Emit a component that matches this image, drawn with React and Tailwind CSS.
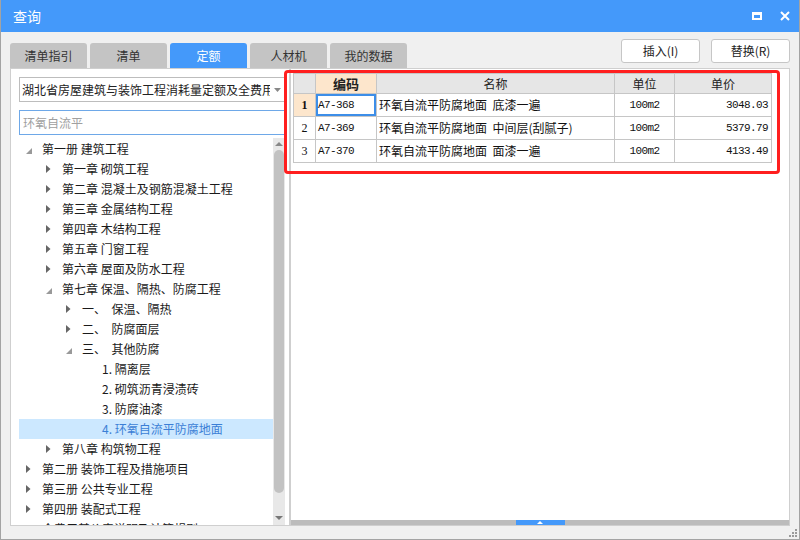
const tree = [
  { lv: 0, t: 'exp', label: '第一册 建筑工程' },
  { lv: 1, t: 'col', label: '第一章 砌筑工程' },
  { lv: 1, t: 'col', label: '第二章 混凝土及钢筋混凝土工程' },
  { lv: 1, t: 'col', label: '第三章 金属结构工程' },
  { lv: 1, t: 'col', label: '第四章 木结构工程' },
  { lv: 1, t: 'col', label: '第五章 门窗工程' },
  { lv: 1, t: 'col', label: '第六章 屋面及防水工程' },
  { lv: 1, t: 'exp', label: '第七章 保温、隔热、防腐工程' },
  { lv: 2, t: 'col', label: '一、  保温、隔热' },
  { lv: 2, t: 'col', label: '二、  防腐面层' },
  { lv: 2, t: 'exp', label: '三、  其他防腐' },
  { lv: 3, t: 'leaf', label: '1. 隔离层' },
  { lv: 3, t: 'leaf', label: '2. 砌筑沥青浸渍砖' },
  { lv: 3, t: 'leaf', label: '3. 防腐油漆' },
  { lv: 3, t: 'leaf', label: '4. 环氧自流平防腐地面', sel: true },
  { lv: 1, t: 'col', label: '第八章 构筑物工程' },
  { lv: 0, t: 'col', label: '第二册 装饰工程及措施项目' },
  { lv: 0, t: 'col', label: '第三册 公共专业工程' },
  { lv: 0, t: 'col', label: '第四册 装配式工程' },
  { lv: 0, t: 'leaf', label: '全费用基价表说明及计算规则' },
];

const rows = [
  { n: '1', code: 'A7-368', name: '环氧自流平防腐地面  底漆一遍', unit: '100m2', price: '3048.03' },
  { n: '2', code: 'A7-369', name: '环氧自流平防腐地面  中间层(刮腻子)', unit: '100m2', price: '5379.79' },
  { n: '3', code: 'A7-370', name: '环氧自流平防腐地面  面漆一遍', unit: '100m2', price: '4133.49' },
];

const tabs = ['清单指引', '清单', '定额', '人材机', '我的数据'];

const cjk = { fontFamily: '"Noto Sans CJK SC", "Noto Sans", sans-serif' };
const mono = { fontFamily: '"Liberation Mono", "Noto Sans CJK SC", monospace' };

function Arrow({ t }) {
  if (t === 'col')
    return (
      <svg width="5" height="8" viewBox="0 0 5 8">
        <polygon points="0,0 4.5,4 0,8" fill="#666" />
      </svg>
    );
  if (t === 'exp')
    return (
      <svg width="6" height="6" viewBox="0 0 6 6" className="mt-[3px]">
        <polygon points="6,0 6,6 0,6" fill="#999" />
      </svg>
    );
  return null;
}

export default function App() {
  return (
    <div className="relative w-[800px] h-[540px] bg-[#f0f0f0] border-x border-b border-[#a3a3a3] flex flex-col overflow-hidden" style={cjk}>
      {/* title bar */}
      <div className="h-[32px] shrink-0 bg-[#4499fa] flex items-center pl-[12px] pr-[9px] text-white">
        <span className="text-[14px]">查询</span>
        <div className="ml-auto flex items-center gap-[18px]">
          <div className="w-[10px] h-[8px] border-2 border-t-[3px] border-white" />
          <svg width="10" height="10" viewBox="0 0 10 10">
            <path d="M1 1 L9 9 M9 1 L1 9" stroke="#fff" strokeWidth="2" />
          </svg>
        </div>
      </div>

      {/* tabs + buttons */}
      <div className="h-[36px] shrink-0 flex px-[9px]">
        <div className="flex gap-[3px] self-end">
          {tabs.map((t) => (
            <div
              key={t}
              className={`w-[77px] h-[25px] rounded-t-[3px] flex items-center justify-center text-[12px] ${
                t === '定额' ? 'bg-[#4499fa] text-white' : 'bg-[#c4c4c4] text-[#333]'
              }`}
            >
              {t}
            </div>
          ))}
        </div>
        <div className="ml-auto flex gap-[11px] mt-[7px] h-[24px]">
          <button className="w-[79px] bg-white border border-[#c6c6c6] rounded-[3px] text-[12px] text-[#222]">插入(I)</button>
          <button className="w-[79px] bg-white border border-[#c6c6c6] rounded-[3px] text-[12px] text-[#222]">替换(R)</button>
        </div>
      </div>

      {/* panels */}
      <div className="h-[458px] shrink-0 flex px-[9px]">
        {/* left */}
        <div className="w-[280px] bg-white border border-[#cfcfcf] flex flex-col">
          <div className="mt-[8px] ml-[8px] w-[268px] h-[25px] border border-[#bdbdbd] flex items-center pl-[2px] pr-[5px]">
            <span className="text-[12px] text-[#222] whitespace-nowrap overflow-hidden flex-1">湖北省房屋建筑与装饰工程消耗量定额及全费用基价表</span>
            <svg width="7" height="4" viewBox="0 0 7 4" className="ml-[4px] shrink-0">
              <polygon points="0,0 7,0 3.5,4" fill="#888" />
            </svg>
          </div>
          <div className="mt-[8px] ml-[8px] w-[268px] h-[25px] border border-[#6ea8e8] flex items-center pl-[3px]">
            <span className="text-[12px] text-[#a0a0a0]">环氧自流平</span>
          </div>
          <div className="mt-[3px] flex-1 flex min-h-0">
            <div className="flex-1 pl-[8px] pt-[1px] overflow-hidden">
              {tree.map((r, i) => (
                <div
                  key={i}
                  className={`h-[20px] flex items-center whitespace-pre text-[12px] ${
                    r.sel ? 'bg-[#cce8ff] text-[#3b7fd6]' : 'text-[#1a1a1a]'
                  }`}
                  style={{ paddingLeft: r.lv * 20 }}
                >
                  <div className="w-[23px] shrink-0 flex items-center pl-[7px]">
                    <Arrow t={r.t} />
                  </div>
                  <span>{r.label}</span>
                </div>
              ))}
            </div>
            <div className="w-[12px] mr-[4px] bg-[#e8e8e8] flex flex-col items-center">
              <svg width="8" height="4" viewBox="0 0 8 4" className="mt-[4px]">
                <polygon points="0,4 8,4 4,0" fill="#888" />
              </svg>
              <div className="mt-[4px] w-[10px] h-[343px] rounded-full bg-[#c2c2c2]" />
              <svg width="8" height="4" viewBox="0 0 8 4" className="mt-auto mb-[5px]">
                <polygon points="0,0 8,0 4,4" fill="#777" />
              </svg>
            </div>
          </div>
        </div>

        {/* right */}
        <div className="flex-1 bg-white border border-[#cfcfcf] flex flex-col">
          <div className="pt-[4px] pl-[2px]">
            <table className="border-collapse table-fixed text-[12px]" style={{ width: 478 }}>
              <colgroup>
                <col style={{ width: 22 }} />
                <col style={{ width: 61 }} />
                <col style={{ width: 238 }} />
                <col style={{ width: 60 }} />
                <col style={{ width: 97 }} />
              </colgroup>
              <thead>
                <tr className="h-[20px] bg-[#e6e6e6] text-[#222]">
                  <th className="border border-[#c6c6c6] font-normal"></th>
                  <th className="border border-[#c6c6c6] bg-[#fde6cc] font-bold text-[13px] leading-[18px]">编码</th>
                  <th className="border border-[#c6c6c6] font-normal">名称</th>
                  <th className="border border-[#c6c6c6] font-normal">单位</th>
                  <th className="border border-[#c6c6c6] font-normal">单价</th>
                </tr>
              </thead>
              <tbody>
                {rows.map((r, i) => (
                  <tr key={r.n} className="h-[23px] text-[#111]">
                    <td
                      className={`border border-[#c6c6c6] text-center text-[12px] ${i === 0 ? 'bg-[#fde6cc] font-bold' : ''}`}
                      style={{ fontFamily: '"Liberation Serif", serif' }}
                    >
                      {r.n}
                    </td>
                    <td
                      className={`border border-[#c6c6c6] pl-[2px] text-[11px] tracking-[-0.6px] ${i === 0 ? 'shadow-[inset_0_0_0_2px_#3d8ee8]' : ''}`}
                      style={mono}
                    >
                      {r.code}
                    </td>
                    <td className="border border-[#c6c6c6] pl-[2px] whitespace-pre">{r.name}</td>
                    <td className="border border-[#c6c6c6] text-center text-[11px] tracking-[-0.6px]" style={mono}>{r.unit}</td>
                    <td className="border border-[#c6c6c6] text-right pr-[3px] text-[11px] tracking-[-0.6px]" style={mono}>{r.price}</td>
                  </tr>
                ))}
              </tbody>
            </table>
          </div>
          <div className="mt-auto h-[5px] bg-[#bcbcbc] flex justify-center">
            <div className="w-[49px] h-[5px] bg-[#4499fa] flex items-center justify-center">
              <svg width="6" height="3" viewBox="0 0 6 3">
                <polygon points="0,3 6,3 3,0" fill="#fff" />
              </svg>
            </div>
          </div>
        </div>
      </div>

      {/* footer with resize grip */}
      <div className="flex-1 flex justify-end items-end pr-[2px] pb-[2px]">
        <div className="grid grid-cols-3 gap-[1px] w-[8px]">
          <span />
          <span />
          <span className="w-[2px] h-[2px] bg-[#9a9a9a]" />
          <span />
          <span className="w-[2px] h-[2px] bg-[#9a9a9a]" />
          <span className="w-[2px] h-[2px] bg-[#9a9a9a]" />
          <span className="w-[2px] h-[2px] bg-[#9a9a9a]" />
          <span className="w-[2px] h-[2px] bg-[#9a9a9a]" />
          <span className="w-[2px] h-[2px] bg-[#9a9a9a]" />
        </div>
      </div>

      {/* red annotation box */}
      <div className="absolute left-[283px] top-[70px] w-[496px] h-[104px] border-[3px] border-[#ff1f1f] rounded-[4px] pointer-events-none" />
    </div>
  );
}
